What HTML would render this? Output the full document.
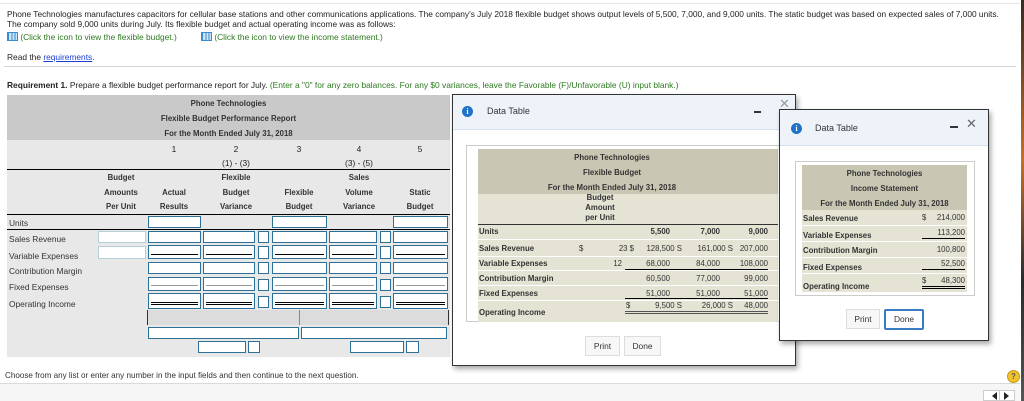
<!DOCTYPE html>
<html><head><meta charset="utf-8"><style>
*{margin:0;padding:0;box-sizing:border-box}
body{width:1024px;height:401px;overflow:hidden;background:#fff;font-family:"Liberation Sans",Arial,sans-serif;color:#222;position:relative}
.a{position:absolute;white-space:nowrap}
.t{font-size:8.4px}
.s{font-size:7.8px}
.b{font-weight:bold}
.g{color:#2d7a1f}
.in{position:absolute;background:#fff;border:1px solid #2e6f95}
.inl{position:absolute;background:#fff;border:1px solid #b6cfdc}
.u1{position:absolute;left:2px;right:2px;bottom:3px;border-top:1px solid #000}
.u2{position:absolute;left:2px;right:2px;bottom:4px;border-top:1px solid #999}
.u3{position:absolute;left:2px;right:2px;bottom:3px;height:3px;border-top:1px solid #000;border-bottom:1px solid #000}
.c{text-align:center}
.r{text-align:right}
.btn{position:absolute;background:#f7f7f7;border:1px solid #ddd;font-size:8.4px;color:#333;text-align:center;line-height:18px}
.icon{position:absolute;width:11px;height:11px;border-radius:50%;background:#1e73c8;color:#fff;font-size:8px;font-weight:bold;text-align:center;line-height:11px;font-family:"Liberation Serif",serif}
.grid{display:inline-block;width:11px;height:9px;border:1px solid #3a8bd0;background:repeating-linear-gradient(90deg,#3a8bd0 0 1px,#cfe4f7 1px 3.3px),#cfe4f7;vertical-align:-1px;position:relative}
</style></head><body>
<div class="a" style="left:0;top:3px;width:1020px;border-top:1px solid #e2e6ea"></div>
<div class="a" style="left:7px;top:9px;font-size:8.35px">Phone Technologies manufactures capacitors for cellular base stations and other communications applications. The company's July 2018 flexible budget shows output levels of 5,500, 7,000, and 9,000 units. The static budget was based on expected sales of 7,000 units.</div>
<div class="a" style="left:7px;top:19px;font-size:8.35px">The company sold 9,000 units during July. Its flexible budget and actual operating income was as follows:</div>
<div class="a t g" style="left:7px;top:32px"><span class="grid"></span> (Click the icon to view the flexible budget.)</div>
<div class="a t g" style="left:201px;top:32px"><span class="grid"></span> (Click the icon to view the income statement.)</div>
<div class="a t" style="left:7px;top:52px">Read the <span style="color:#1a3fd6;text-decoration:underline">requirements</span>.</div>
<div class="a" style="left:4px;top:66px;width:1012px;border-top:1px solid #d0d6dc"></div>
<div class="a t" style="left:7px;top:80px"><b>Requirement 1.</b> Prepare a flexible budget performance report for July. <span class="g">(Enter a "0" for any zero balances. For any $0 variances, leave the Favorable (F)/Unfavorable (U) input blank.)</span></div>

<!-- main table -->
<div class="a" style="left:7px;top:95px;width:443px;height:262px;background:#e8e8e8"></div>
<div class="a" style="left:7px;top:95px;width:443px;height:45px;background:#c9c9c9"></div>
<div class="a s b c" style="left:7px;top:99px;width:443px;color:#333">Phone Technologies</div>
<div class="a s b c" style="left:7px;top:114px;width:443px;color:#333">Flexible Budget Performance Report</div>
<div class="a s b c" style="left:7px;top:129px;width:443px;color:#333">For the Month Ended July 31, 2018</div>
<div class="a t c" style="left:154px;top:144px;width:40px">1</div>
<div class="a t c" style="left:216px;top:144px;width:40px">2</div>
<div class="a t c" style="left:279px;top:144px;width:40px">3</div>
<div class="a t c" style="left:339px;top:144px;width:40px">4</div>
<div class="a t c" style="left:400px;top:144px;width:40px">5</div>
<div class="a t c" style="left:206px;top:158px;width:60px">(1) - (3)</div>
<div class="a t c" style="left:329px;top:158px;width:60px">(3) - (5)</div>
<div class="a" style="left:7px;top:169px;width:443px;border-top:1px solid #000"></div>
<div class="a s b c" style="left:91px;top:171px;width:60px;line-height:14.5px;color:#333">Budget<br>Amounts<br>Per Unit</div>
<div class="a s b c" style="left:144px;top:185.5px;width:60px;line-height:14.5px;color:#333">Actual<br>Results</div>
<div class="a s b c" style="left:206px;top:171px;width:60px;line-height:14.5px;color:#333">Flexible<br>Budget<br>Variance</div>
<div class="a s b c" style="left:269px;top:185.5px;width:60px;line-height:14.5px;color:#333">Flexible<br>Budget</div>
<div class="a s b c" style="left:329px;top:171px;width:60px;line-height:14.5px;color:#333">Sales<br>Volume<br>Variance</div>
<div class="a s b c" style="left:390px;top:185.5px;width:60px;line-height:14.5px;color:#333">Static<br>Budget</div>
<div class="a" style="left:7px;top:214px;width:443px;border-top:1px solid #000"></div>
<div class="a" style="left:7px;top:229px;width:443px;border-top:1px solid #000"></div>
<div class="a t" style="left:9px;top:218px;color:#333">Units</div>
<div class="a t" style="left:9px;top:234px;color:#333">Sales Revenue</div>
<div class="a t" style="left:9px;top:251px;color:#333">Variable Expenses</div>
<div class="a t" style="left:9px;top:266px;color:#333">Contribution Margin</div>
<div class="a t" style="left:9px;top:282px;color:#333">Fixed Expenses</div>
<div class="a t" style="left:9px;top:299px;color:#333">Operating Income</div>

<div class="in" style="left:148px;top:216px;width:53px;height:12px"></div>
<div class="in" style="left:272px;top:216px;width:55px;height:12px"></div>
<div class="in" style="left:393px;top:216px;width:55px;height:12px"></div>
<div class="inl" style="left:98px;top:231px;width:48px;height:12px"></div>
<div class="inl" style="left:98px;top:246px;width:48px;height:13px"></div>

<div class="in" style="left:148px;top:231px;width:53px;height:12px"></div>
<div class="in" style="left:203px;top:231px;width:52px;height:12px"></div>
<div class="in" style="left:258px;top:231px;width:11px;height:12px"></div>
<div class="in" style="left:272px;top:231px;width:55px;height:12px"></div>
<div class="in" style="left:329px;top:231px;width:48px;height:12px"></div>
<div class="in" style="left:380px;top:231px;width:11px;height:12px"></div>
<div class="in" style="left:393px;top:231px;width:55px;height:12px"></div>

<div class="in" style="left:148px;top:245px;width:53px;height:14px"><div class="u1"></div></div>
<div class="in" style="left:203px;top:245px;width:52px;height:14px"><div class="u1"></div></div>
<div class="in" style="left:258px;top:246px;width:11px;height:13px"></div>
<div class="in" style="left:272px;top:245px;width:55px;height:14px"><div class="u1"></div></div>
<div class="in" style="left:329px;top:245px;width:48px;height:14px"><div class="u1"></div></div>
<div class="in" style="left:380px;top:246px;width:11px;height:13px"></div>
<div class="in" style="left:393px;top:245px;width:55px;height:14px"><div class="u1"></div></div>

<div class="in" style="left:148px;top:262px;width:53px;height:12px"></div>
<div class="in" style="left:203px;top:262px;width:52px;height:12px"></div>
<div class="in" style="left:258px;top:262px;width:11px;height:12px"></div>
<div class="in" style="left:272px;top:262px;width:55px;height:12px"></div>
<div class="in" style="left:329px;top:262px;width:48px;height:12px"></div>
<div class="in" style="left:380px;top:262px;width:11px;height:12px"></div>
<div class="in" style="left:393px;top:262px;width:55px;height:12px"></div>

<div class="in" style="left:148px;top:277px;width:53px;height:14px"><div class="u2"></div></div>
<div class="in" style="left:203px;top:277px;width:52px;height:14px"><div class="u2"></div></div>
<div class="in" style="left:258px;top:279px;width:11px;height:12px"></div>
<div class="in" style="left:272px;top:277px;width:55px;height:14px"><div class="u2"></div></div>
<div class="in" style="left:329px;top:277px;width:48px;height:14px"><div class="u2"></div></div>
<div class="in" style="left:380px;top:279px;width:11px;height:12px"></div>
<div class="in" style="left:393px;top:277px;width:55px;height:14px"><div class="u2"></div></div>

<div class="in" style="left:148px;top:293px;width:53px;height:16px"><div class="u3"></div></div>
<div class="in" style="left:203px;top:293px;width:52px;height:16px"><div class="u3"></div></div>
<div class="in" style="left:258px;top:296px;width:11px;height:12px"></div>
<div class="in" style="left:272px;top:293px;width:55px;height:16px"><div class="u3"></div></div>
<div class="in" style="left:329px;top:293px;width:48px;height:16px"><div class="u3"></div></div>
<div class="in" style="left:380px;top:296px;width:11px;height:12px"></div>
<div class="in" style="left:393px;top:293px;width:55px;height:16px"><div class="u3"></div></div>

<div class="a" style="left:147px;top:310px;width:302px;height:15px;background:#dcdcdc;border-left:1px solid #333;border-right:1px solid #333"></div>
<div class="a" style="left:299px;top:310px;height:15px;border-left:1px solid #888"></div>
<div class="in" style="left:148px;top:327px;width:151px;height:12px"></div>
<div class="in" style="left:301px;top:327px;width:146px;height:12px"></div>
<div class="in" style="left:198px;top:341px;width:48px;height:12px"></div>
<div class="in" style="left:248px;top:341px;width:12px;height:12px"></div>
<div class="in" style="left:350px;top:341px;width:54px;height:12px"></div>
<div class="in" style="left:406px;top:341px;width:13px;height:12px"></div>

<div class="a" style="left:5px;top:371px;font-size:8.1px;color:#333">Choose from any list or enter any number in the input fields and then continue to the next question.</div>
<div class="a" style="left:0;top:383px;width:1020px;border-top:1px solid #d6dbe0"></div>
<div class="a" style="left:0;top:384px;width:1020px;height:17px;background:#f6f6f6"></div>
<div class="a" style="left:1007px;top:370px;width:13px;height:13px;border-radius:50%;background:#f2c230;border:1px solid #c89a10;font-size:8px;font-weight:bold;text-align:center;line-height:11px;color:#555">?</div>
<div class="a" style="left:983px;top:390px;width:32px;height:11px;background:#fff;border:1px solid #ccc"></div>
<div class="a" style="left:992px;top:392px;width:0;height:0;border-top:4px solid transparent;border-bottom:4px solid transparent;border-right:5px solid #222"></div>
<div class="a" style="left:999px;top:390px;height:11px;border-left:1px solid #ccc"></div>
<div class="a" style="left:1004px;top:392px;width:0;height:0;border-top:4px solid transparent;border-bottom:4px solid transparent;border-left:5px solid #222"></div>
<div class="a" style="left:1021px;top:0;width:3px;height:401px;background:linear-gradient(#3a2a20,#c8702a 40%,#2a2a30 70%,#555)"></div>

<!-- dialog 1 -->
<div class="a" style="left:452px;top:94px;width:344px;height:272px;background:#fff;border:1px solid #333;box-shadow:2px 3px 5px rgba(0,0,0,.35)"></div>
<div class="a" style="left:453px;top:95px;width:342px;height:35px;background:#eef3fa;border-bottom:1px solid #d3e2f0"></div>
<div class="icon" style="left:462px;top:106px">i</div>
<div class="a" style="left:487px;top:106px;font-size:9px;color:#333">Data Table</div>
<div class="a" style="left:754px;top:111px;width:7px;height:2px;background:#333"></div>
<div class="a" style="left:779px;top:97px;font-size:13px;color:#999;line-height:13px">&#x2715;</div>
<div class="a" style="left:466px;top:145px;width:320px;height:177px;border:1px solid #ccc;background:#fff"></div>
<div class="a" style="left:478px;top:149px;width:300px;height:45px;background:#c9c7b3"></div>
<div class="a" style="left:478px;top:194px;width:300px;height:128px;background:#e5e3d4"></div>
<div class="a s b c" style="left:478px;top:153px;width:268px;color:#333">Phone Technologies</div>
<div class="a s b c" style="left:478px;top:168px;width:268px;color:#333">Flexible Budget</div>
<div class="a s b c" style="left:478px;top:183px;width:268px;color:#333">For the Month Ended July 31, 2018</div>
<div class="a s b c" style="left:575px;top:193px;width:50px;line-height:10px;color:#333">Budget<br>Amount<br>per Unit</div>
<div class="a" style="left:478px;top:224px;width:300px;border-top:1px solid #333"></div>
<div class="a" style="left:478px;top:239px;width:300px;border-top:1px solid #fff"></div>
<div class="a" style="left:478px;top:256px;width:300px;border-top:1px solid #fff"></div>
<div class="a" style="left:478px;top:270px;width:300px;border-top:1px solid #fff"></div>
<div class="a" style="left:478px;top:285px;width:300px;border-top:1px solid #fff"></div>
<div class="a" style="left:478px;top:300px;width:300px;border-top:1px solid #fff"></div>
<div class="a s b" style="left:479px;top:227px;color:#333">Units</div>
<div class="a s b" style="left:479px;top:244px;color:#333">Sales Revenue</div>
<div class="a s b" style="left:479px;top:259px;color:#333">Variable Expenses</div>
<div class="a s b" style="left:479px;top:274px;color:#333">Contribution Margin</div>
<div class="a s b" style="left:479px;top:289px;color:#333">Fixed Expenses</div>
<div class="a s b" style="left:479px;top:308px;color:#333">Operating Income</div>
<div class="a s r b" style="left:620px;top:227px;width:50px;color:#333">5,500</div>
<div class="a s r b" style="left:670px;top:227px;width:50px;color:#333">7,000</div>
<div class="a s r b" style="left:718px;top:227px;width:50px;color:#333">9,000</div>
<div class="a s" style="left:579px;top:244px;color:#333">$</div>
<div class="a s r" style="left:600px;top:244px;width:34px;color:#333">23 $</div>
<div class="a s r" style="left:634px;top:244px;width:48px;color:#333">128,500 S</div>
<div class="a s r" style="left:681px;top:244px;width:52px;color:#333">161,000 S</div>
<div class="a s r" style="left:726px;top:244px;width:42px;color:#333">207,000</div>
<div class="a s r" style="left:600px;top:259px;width:22px;color:#333">12</div>
<div class="a s r" style="left:620px;top:259px;width:50px;color:#333">68,000</div>
<div class="a s r" style="left:670px;top:259px;width:50px;color:#333">84,000</div>
<div class="a s r" style="left:718px;top:259px;width:50px;color:#333">108,000</div>
<div class="a" style="left:625px;top:269px;width:143px;border-top:1px solid #000"></div>
<div class="a s r" style="left:620px;top:274px;width:50px;color:#333">60,500</div>
<div class="a s r" style="left:670px;top:274px;width:50px;color:#333">77,000</div>
<div class="a s r" style="left:718px;top:274px;width:50px;color:#333">99,000</div>
<div class="a s r" style="left:620px;top:289px;width:50px;color:#333">51,000</div>
<div class="a s r" style="left:670px;top:289px;width:50px;color:#333">51,000</div>
<div class="a s r" style="left:718px;top:289px;width:50px;color:#333">51,000</div>
<div class="a" style="left:625px;top:298px;width:143px;border-top:1px solid #000"></div>
<div class="a s" style="left:626px;top:301px;color:#333">$</div>
<div class="a s r" style="left:634px;top:301px;width:48px;color:#333">9,500 S</div>
<div class="a s r" style="left:681px;top:301px;width:52px;color:#333">26,000 S</div>
<div class="a s r" style="left:726px;top:301px;width:42px;color:#333">48,000</div>
<div class="a" style="left:625px;top:311px;width:143px;height:3px;border-top:1px solid #555;border-bottom:1px solid #555"></div>
<div class="btn" style="left:585px;top:336px;width:35px;height:20px">Print</div>
<div class="btn" style="left:624px;top:336px;width:37px;height:20px">Done</div>

<!-- dialog 2 -->
<div class="a" style="left:779px;top:109px;width:210px;height:232px;background:#fff;border:1px solid #333;box-shadow:2px 3px 5px rgba(0,0,0,.35)"></div>
<div class="a" style="left:780px;top:110px;width:208px;height:36px;background:#eef3fa;border-bottom:1px solid #d3e2f0"></div>
<div class="icon" style="left:791px;top:123px">i</div>
<div class="a" style="left:815px;top:123px;font-size:9px;color:#333">Data Table</div>
<div class="a" style="left:950px;top:126px;width:8px;height:2px;background:#333"></div>
<div class="a" style="left:966px;top:117px;font-size:13px;color:#666;line-height:13px">&#x2715;</div>
<div class="a" style="left:795px;top:161px;width:180px;height:135px;border:1px solid #ccc"></div>
<div class="a" style="left:802px;top:165px;width:165px;height:45px;background:#c9c7b3"></div>
<div class="a" style="left:802px;top:210px;width:165px;height:82px;background:#e5e3d4"></div>
<div class="a" style="left:802px;top:225px;width:165px;border-top:1px solid #fff"></div>
<div class="a" style="left:802px;top:241px;width:165px;border-top:1px solid #fff"></div>
<div class="a" style="left:802px;top:257px;width:165px;border-top:1px solid #fff"></div>
<div class="a" style="left:802px;top:273px;width:165px;border-top:1px solid #fff"></div>
<div class="a s b c" style="left:802px;top:169px;width:165px;color:#333">Phone Technologies</div>
<div class="a s b c" style="left:802px;top:184px;width:165px;color:#333">Income Statement</div>
<div class="a s b c" style="left:802px;top:199px;width:165px;color:#333">For the Month Ended July 31, 2018</div>
<div class="a s b" style="left:803px;top:214px;color:#333">Sales Revenue</div>
<div class="a s b" style="left:803px;top:231px;color:#333">Variable Expenses</div>
<div class="a s b" style="left:803px;top:246px;color:#333">Contribution Margin</div>
<div class="a s b" style="left:803px;top:263px;color:#333">Fixed Expenses</div>
<div class="a s b" style="left:803px;top:282px;color:#333">Operating Income</div>
<div class="a s" style="left:922px;top:213px;color:#333">$</div>
<div class="a s r" style="left:920px;top:213px;width:45px;color:#333">214,000</div>
<div class="a s r" style="left:920px;top:228px;width:45px;color:#333">113,200</div>
<div class="a" style="left:922px;top:238px;width:43px;border-top:1px solid #000"></div>
<div class="a s r" style="left:920px;top:245px;width:45px;color:#333">100,800</div>
<div class="a s r" style="left:920px;top:259px;width:45px;color:#333">52,500</div>
<div class="a" style="left:922px;top:269px;width:43px;border-top:1px solid #000"></div>
<div class="a s" style="left:922px;top:276px;color:#333">$</div>
<div class="a s r" style="left:920px;top:276px;width:45px;color:#333">48,300</div>
<div class="a" style="left:922px;top:286px;width:43px;height:3px;border-top:1px solid #000;border-bottom:1px solid #000"></div>
<div class="btn" style="left:846px;top:309px;width:34px;height:20px">Print</div>
<div class="btn" style="left:884px;top:309px;width:40px;height:21px;background:#fff;border:2px solid #3a7cc4;border-radius:2px;line-height:17px">Done</div>
</body></html>
